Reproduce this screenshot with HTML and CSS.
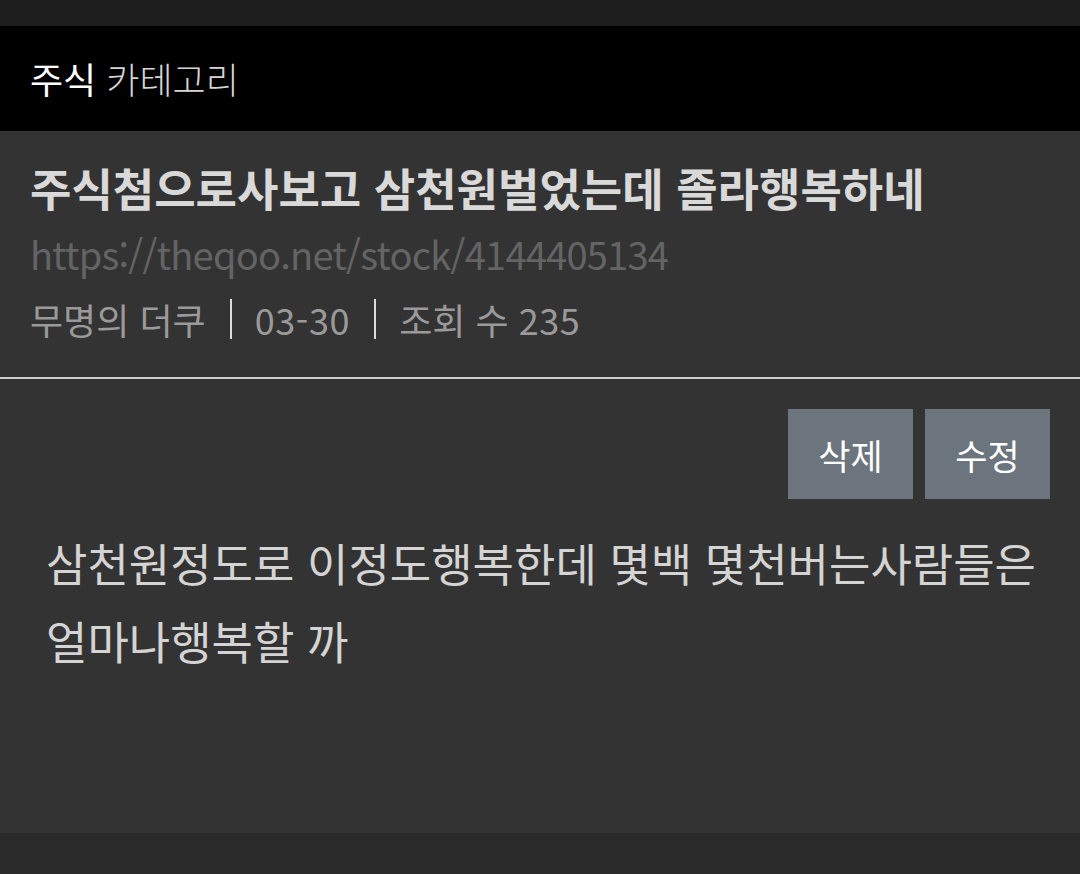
FILE: index.html
```html
<!DOCTYPE html>
<html lang="ko">
<head>
<meta charset="utf-8">
<title>주식 카테고리</title>
<link rel="stylesheet" href="styles.css">
</head>
<body>
<div class="statusbar"></div>
<header class="cat-header">
  <span class="cat-name">주식</span>&nbsp;<span class="cat-label">카테고리</span>
</header>
<main class="page">
  <section class="post-head">
    <h1 class="post-title">주식첨으로사보고 삼천원벌었는데 졸라행복하네</h1>
    <div class="post-url">https://theqoo.net/stock/4144405134</div>
    <div class="post-meta">
      <span>무명의 더쿠</span>
      <span class="sep"></span>
      <span class="num">03-30</span>
      <span class="sep"></span>
      <span>조회 수 <span class="num">235</span></span>
    </div>
  </section>
  <div class="actions">
    <button class="btn">삭제</button>
    <button class="btn">수정</button>
  </div>
  <div class="post-body">삼천원정도로 이정도행복한데 몇백 몇천버는사람들은<br>얼마나행복할 까</div>
</main>
<footer class="bottom"></footer>
</body>
</html>
```
FILE: styles.css
```css
* { box-sizing: border-box; }
html, body { margin: 0; padding: 0; }
body {
  width: 1080px;
  height: 874px;
  background: #333333;
  font-family: "Noto Sans CJK KR", "Noto Sans", sans-serif;
  display: flex;
  flex-direction: column;
  overflow: hidden;
}
.statusbar { height: 26px; background: #1e1e1e; flex: none; }
.cat-header {
  height: 105px;
  flex: none;
  background: #000;
  display: flex;
  align-items: center;
  padding-left: 30px;
  padding-bottom: 2px;
  font-size: 36px;
  color: #ffffff;
}
.cat-label { color: #d6d6d6; font-weight: 300; }
.page { flex: 1; background: #333333; }
.post-head {
  padding: 27px 30px 0;
  border-bottom: 2px solid #cfcfcf;
  height: 248px;
}
.post-title {
  margin: 0;
  font-size: 45px;
  font-weight: 700;
  color: #d9d9d9;
  line-height: 60px;
}
.post-url {
  font-size: 38px;
  letter-spacing: -0.75px;
  color: #646464;
  line-height: 60px;
  margin-top: 6px;
}
.post-meta {
  display: flex;
  align-items: center;
  font-size: 36px;
  color: #9a9a9a;
  line-height: 60px;
  margin-top: 5px;
}
.num { letter-spacing: 0.6px; }
.sep {
  width: 2px;
  height: 40px;
  background: #dcdcdc;
  margin: 0 23px 0 24px;
}
.actions {
  display: flex;
  justify-content: flex-end;
  gap: 12px;
  padding: 30px 30px 0 0;
}
.btn {
  width: 125px;
  height: 90px;
  border: 0;
  border-radius: 0;
  background: #6c757d;
  color: #ffffff;
  font-family: inherit;
  font-size: 35px;
  padding: 0;
}
.post-body {
  padding: 25px 30px 0 46px;
  font-size: 45px;
  line-height: 78px;
  color: #d4d4d4;
}
.bottom { height: 41px; flex: none; background: #2a2a2a; }
```
